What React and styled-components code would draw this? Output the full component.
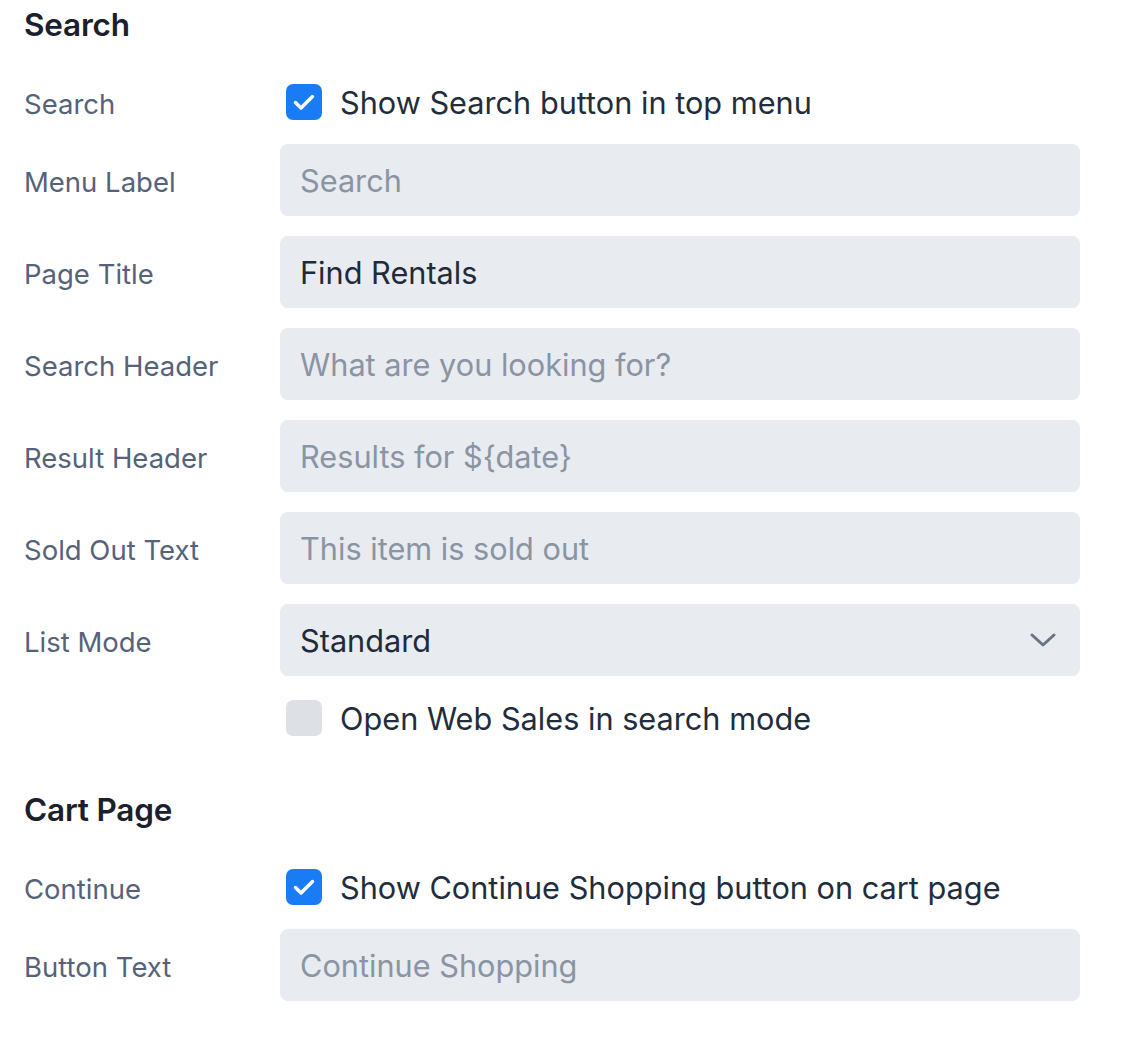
import React from 'react'
import styled, { createGlobalStyle } from 'styled-components'

const GlobalStyle = createGlobalStyle`
  body {
    margin: 0;
    background: #ffffff;
    font-family: Inter, "Noto Sans", sans-serif;
    -webkit-font-smoothing: antialiased;
  }
`

const Page = styled.div`
  padding: 0 0 40px 24px;
  width: 1056px;
`

const SectionTitle = styled.h2`
  margin: ${({ first }) => (first ? '0' : '45px')} 0 30px;
  height: 50px;
  line-height: 50px;
  font-size: 31.5px;
  font-weight: 600;
  letter-spacing: -0.2px;
  color: #1a202c;
`

const Rows = styled.div`
  display: flex;
  flex-direction: column;
  gap: 20px;
`

const Row = styled.div`
  display: grid;
  grid-template-columns: 256px 800px;
  align-items: center;
  min-height: ${({ compact }) => (compact ? '44px' : '72px')};
`

const Label = styled.label`
  font-size: 27.5px;
  color: #56627a;
  padding-top: 3px;
`

const Input = styled.input`
  box-sizing: border-box;
  width: 100%;
  height: 72px;
  padding: 0 20px;
  border: none;
  border-radius: 8px;
  background: #e8ebf0;
  font-family: inherit;
  font-size: 30.7px;
  color: #1f2a3a;
  outline: none;

  &::placeholder {
    color: #8a94a3;
  }
`

const SelectBox = styled.div`
  box-sizing: border-box;
  height: 72px;
  padding: 0 24px 0 20px;
  border-radius: 8px;
  background: #e8ebf0;
  display: flex;
  align-items: center;
  justify-content: space-between;
  font-size: 30.7px;
  color: #1f2a3a;
`

const CheckLine = styled.label`
  grid-column: 2;
  display: flex;
  align-items: center;
  gap: 18px;
  padding-left: 6px;
  font-size: 30.7px;
  color: #1f2d3d;
`

const Box = styled.span`
  width: 36px;
  height: 36px;
  border-radius: 7px;
  background: ${({ checked }) => (checked ? '#1a7cf5' : '#dde1e6')};
  display: flex;
  align-items: center;
  justify-content: center;
  flex-shrink: 0;
`

const Checkbox = ({ checked, children }) => (
  <CheckLine>
    <Box checked={checked}>
      {checked && (
        <svg width="36" height="36" viewBox="0 0 36 36" fill="none">
          <path d="M9.5 18.5l5.5 5.5 11.5-11.5" stroke="#fff" strokeWidth="3.5" strokeLinecap="round" strokeLinejoin="round" />
        </svg>
      )}
    </Box>
    {children}
  </CheckLine>
)

const Chevron = () => (
  <svg width="26" height="16" viewBox="0 0 26 16" fill="none">
    <path d="M2 3l11 10 11-10" stroke="#6b7482" strokeWidth="3" strokeLinecap="round" strokeLinejoin="round" />
  </svg>
)

const Field = ({ label, placeholder, value }) => (
  <Row>
    <Label>{label}</Label>
    <Input placeholder={placeholder} defaultValue={value} />
  </Row>
)

const App = () => {
  return (
    <Page>
      <GlobalStyle />
      <SectionTitle first>Search</SectionTitle>
      <Rows>
        <Row compact>
          <Label>Search</Label>
          <Checkbox checked>Show Search button in top menu</Checkbox>
        </Row>
        <Field label="Menu Label" placeholder="Search" />
        <Field label="Page Title" value="Find Rentals" />
        <Field label="Search Header" placeholder="What are you looking for?" />
        <Field label="Result Header" placeholder="Results for ${date}" />
        <Field label="Sold Out Text" placeholder="This item is sold out" />
        <Row>
          <Label>List Mode</Label>
          <SelectBox>
            Standard
            <Chevron />
          </SelectBox>
        </Row>
        <Row compact>
          <Checkbox>Open Web Sales in search mode</Checkbox>
        </Row>
      </Rows>

      <SectionTitle>Cart Page</SectionTitle>
      <Rows>
        <Row compact>
          <Label>Continue</Label>
          <Checkbox checked>Show Continue Shopping button on cart page</Checkbox>
        </Row>
        <Field label="Button Text" placeholder="Continue Shopping" />
      </Rows>
    </Page>
  )
}

export default App
